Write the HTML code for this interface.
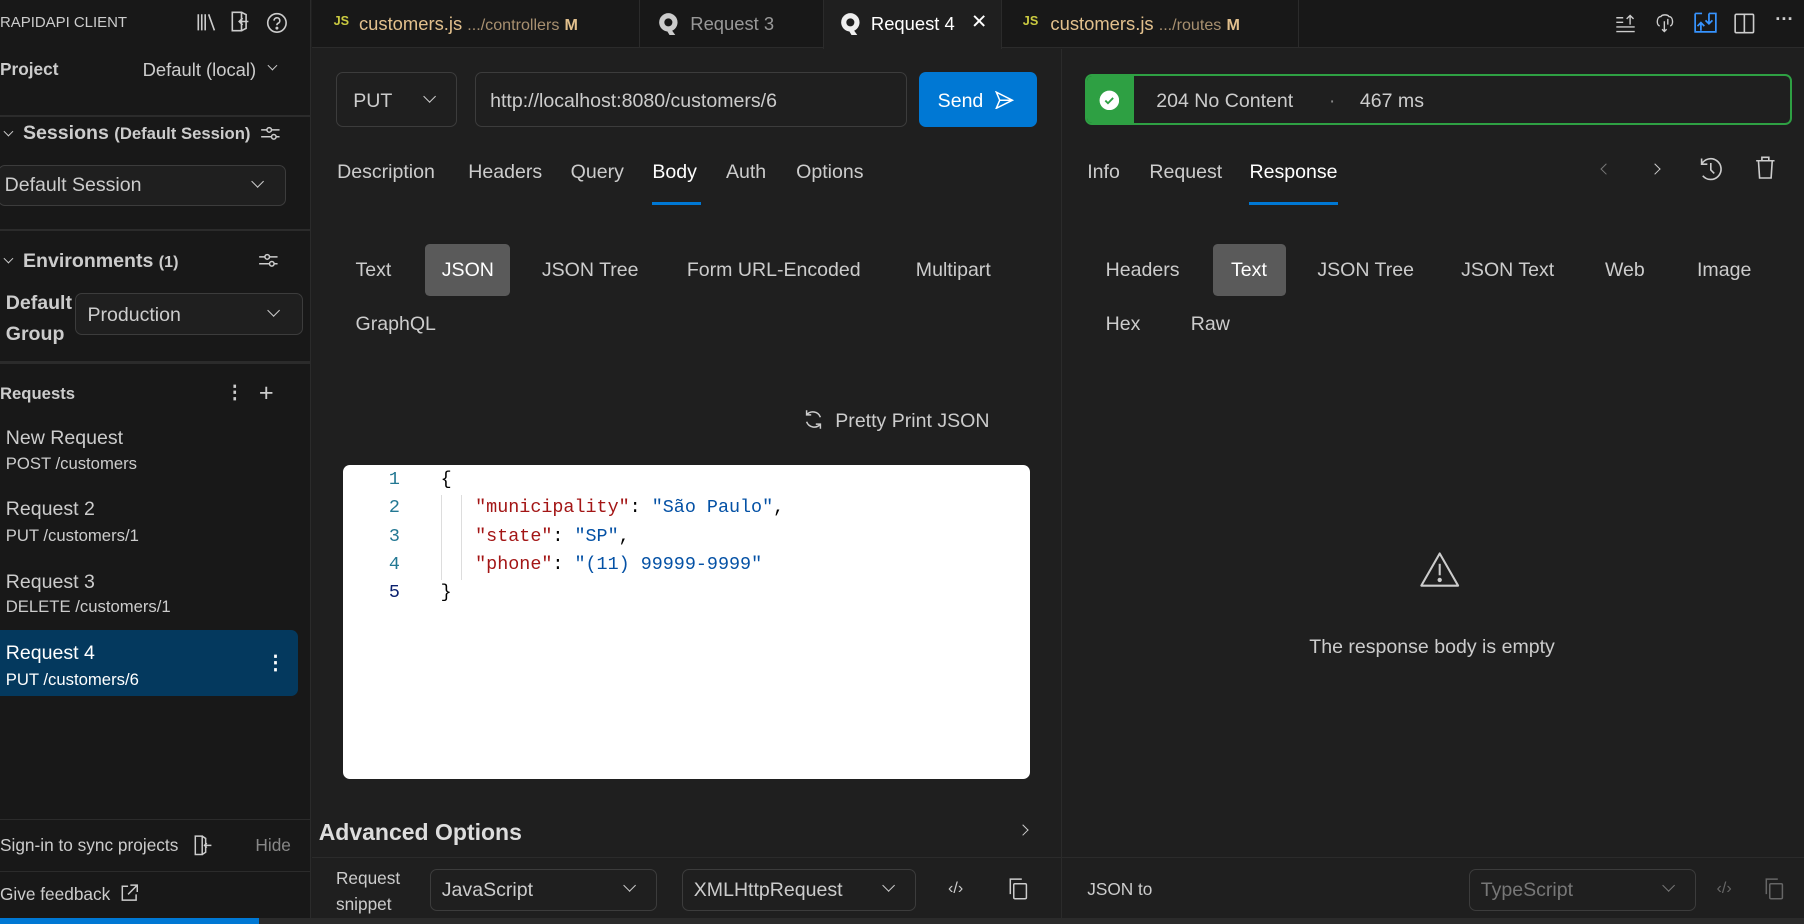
<!DOCTYPE html>
<html><head><meta charset="utf-8"><style>
*{box-sizing:border-box;margin:0;padding:0}
html,body{width:1804px;height:924px;overflow:hidden;background:#1f1f1f}
#w{zoom:1.15051;width:1568px;height:803px;position:relative;font-family:"Liberation Sans",sans-serif;color:#ccc;font-size:15px;background:#1f1f1f}
.a{position:absolute;white-space:nowrap}
.ln{position:absolute;background:#2b2b2b}
.dd{position:absolute;border:1px solid #3c3c3c;border-radius:6px;background:#1f1f1f}
.chev{position:absolute;width:8px;height:8px;border-right:1.5px solid #ccc;border-bottom:1.5px solid #ccc;transform:rotate(45deg)}
svg{position:absolute}
.mono{font-family:"Liberation Mono",monospace;font-size:16px}
</style></head><body><div id="w">
<!-- sidebar -->
<div class="a" style="left:0;top:0;width:270px;height:798px;background:#181818;border-right:1px solid #2b2b2b"></div>
<div class="a" style="left:0;top:12px;font-size:13px;color:#ccc">RAPIDAPI CLIENT</div>
<svg style="left:170px;top:10px" width="20" height="18" viewBox="0 0 20 18" fill="none" stroke="#ccc" stroke-width="1.4"><path d="M2 2v14M5 2v14M8 2v14M11 2l5 14"/></svg>
<svg style="left:200px;top:9px" width="18" height="20" viewBox="0 0 18 20" fill="none" stroke="#ccc" stroke-width="1.4"><path d="M2 2h8v16H2zM10 2l4 2v12l-4 2M16 10h-8M11 7l-3 3 3 3"/></svg>
<svg style="left:231px;top:10px" width="19" height="19" viewBox="0 0 19 19" fill="none" stroke="#ccc" stroke-width="1.4"><circle cx="9.5" cy="9.5" r="8"/><path d="M7 7.5a2.5 2.5 0 1 1 3.5 2.3c-.8.4-1 .9-1 1.7"/><circle cx="9.5" cy="14" r=".6" fill="#ccc"/></svg>
<div class="a" style="left:0;top:51px;font-weight:bold;font-size:15px;color:#ccc">Project</div>
<div class="a" style="left:124px;top:51px;font-size:16px">Default (local)</div>
<div class="chev" style="left:234px;top:54px;width:6px;height:6px;border-width:1px"></div>
<div class="ln" style="left:0;top:100px;width:270px;height:2px"></div>
<div class="chev" style="left:4px;top:111px;width:6px;height:6px;border-width:1px"></div>
<div class="a" style="left:20px;top:106px;font-weight:bold;font-size:17px">Sessions <span style="font-size:14.5px">(Default Session)</span></div>
<svg style="left:226px;top:107px" width="18" height="18" viewBox="0 0 18 18" fill="none" stroke="#ccc" stroke-width="1.3"><path d="M1 6h5M10 6h7M1 12h9M14 12h3"/><circle cx="8" cy="6" r="2"/><circle cx="12" cy="12" r="2"/></svg>
<div class="dd" style="left:-2px;top:143px;width:251px;height:36px"></div>
<div class="a" style="left:4px;top:151px;font-size:17px">Default Session</div>
<div class="chev" style="left:220px;top:154px"></div>
<div class="ln" style="left:0;top:199px;width:270px;height:2px"></div>
<div class="chev" style="left:4px;top:222px;width:6px;height:6px;border-width:1px"></div>
<div class="a" style="left:20px;top:217px;font-weight:bold;font-size:17px">Environments <span style="font-size:14px">(1)</span></div>
<svg style="left:224px;top:217px" width="18" height="18" viewBox="0 0 18 18" fill="none" stroke="#ccc" stroke-width="1.3"><path d="M1 6h5M10 6h7M1 12h9M14 12h3"/><circle cx="8" cy="6" r="2"/><circle cx="12" cy="12" r="2"/></svg>
<div class="a" style="left:5px;top:250px;font-weight:bold;font-size:17px;line-height:27px">Default<br>Group</div>
<div class="dd" style="left:65px;top:255px;width:198px;height:36px"></div>
<div class="a" style="left:76px;top:264px;font-size:17px">Production</div>
<div class="chev" style="left:234px;top:266px"></div>
<div class="ln" style="left:0;top:314px;width:270px;height:2px"></div>
<div class="a" style="left:0;top:334px;font-weight:bold;font-size:14.5px">Requests</div>
<div class="a" style="left:196px;top:331px;font-size:16px;font-weight:bold">⋮</div>
<div class="a" style="left:225px;top:329px;font-size:22px;font-weight:300">+</div>
<div class="a" style="left:5px;top:371px;font-size:17px">New Request</div>
<div class="a" style="left:5px;top:395px;font-size:14.5px">POST /customers</div>
<div class="a" style="left:5px;top:433px;font-size:17px">Request 2</div>
<div class="a" style="left:5px;top:457px;font-size:14.5px">PUT /customers/1</div>
<div class="a" style="left:5px;top:496px;font-size:17px">Request 3</div>
<div class="a" style="left:5px;top:519px;font-size:14.5px">DELETE /customers/1</div>
<div class="a" style="left:0;top:548px;width:259px;height:57px;background:#04395e;border-radius:0 6px 6px 0"></div>
<div class="a" style="left:5px;top:558px;font-size:17px;color:#fff">Request 4</div>
<div class="a" style="left:5px;top:582px;font-size:14.5px;color:#fff">PUT /customers/6</div>
<div class="a" style="left:231px;top:566px;font-size:17px;color:#fff;font-weight:bold">⋮</div>
<div class="ln" style="left:0;top:712px;width:270px;height:1px"></div>
<div class="a" style="left:0;top:726px;font-size:15px">Sign-in to sync projects</div>
<svg style="left:168px;top:726px" width="18" height="18" viewBox="0 0 18 18" fill="none" stroke="#ccc" stroke-width="1.3"><path d="M2 1h6v16H2zM8 1l3 2v12l-3 2M16 9h-6M12 7l-2 2 2 2"/></svg>
<div class="a" style="left:222px;top:726px;font-size:15px;color:#888">Hide</div>
<div class="ln" style="left:0;top:757px;width:270px;height:1px"></div>
<div class="a" style="left:0;top:768px;font-size:15px">Give feedback</div>
<svg style="left:104px;top:768px" width="16" height="16" viewBox="0 0 16 16" fill="none" stroke="#ccc" stroke-width="1.3"><path d="M7 2H2v12h12V9M9 1h6v6M15 1L7 9"/></svg>

<!-- tab bar -->
<div class="a" style="left:271px;top:0;width:1297px;height:42px;background:#181818;border-bottom:1px solid #2b2b2b"></div>
<div class="a" style="left:555px;top:0;width:1px;height:42px;background:#2b2b2b"></div>
<div class="a" style="left:715px;top:0;width:156px;height:43px;background:#1f1f1f;border-left:1px solid #2b2b2b;border-right:1px solid #2b2b2b"></div>
<div class="a" style="left:1128px;top:0;width:1px;height:42px;background:#2b2b2b"></div>
<div class="a" style="left:290px;top:12px;font-size:11px;font-weight:bold;color:#cbcb41">JS</div>
<div class="a" style="left:312px;top:11px;font-size:16px;color:#e2c08d">customers.js <span style="font-size:14px;color:#a89070">.../controllers</span> <b style="font-size:14px">M</b></div>
<svg style="left:572px;top:10px" width="18" height="20" viewBox="0 0 18 20"><circle cx="9" cy="9" r="8" fill="#ccc"/><circle cx="9" cy="9" r="3.5" fill="#181818"/><path d="M10 13l5 7h-5l-3-5z" fill="#ccc"/></svg>
<div class="a" style="left:600px;top:11px;font-size:16px;color:#999">Request 3</div>
<svg style="left:730px;top:10px" width="18" height="20" viewBox="0 0 18 20"><circle cx="9" cy="9" r="8" fill="#eee"/><circle cx="9" cy="9" r="3.5" fill="#1f1f1f"/><path d="M10 13l5 7h-5l-3-5z" fill="#eee"/></svg>
<div class="a" style="left:757px;top:11px;font-size:16px;color:#fff">Request 4</div>
<div class="a" style="left:844px;top:9px;font-size:17px;color:#fff">✕</div>
<div class="a" style="left:889px;top:12px;font-size:11px;font-weight:bold;color:#cbcb41">JS</div>
<div class="a" style="left:913px;top:11px;font-size:16px;color:#e2c08d">customers.js <span style="font-size:14px;color:#a89070">.../routes</span> <b style="font-size:14px">M</b></div>
<svg style="left:1403px;top:10px" width="20" height="20" viewBox="0 0 20 20" fill="none" stroke="#ccc" stroke-width="1.2"><path d="M2 5h6M2 9h6M2 13h16M2 17h16M14 11V3M11 6l3-3 3 3"/></svg>
<svg style="left:1438px;top:10px" width="20" height="20" viewBox="0 0 20 20" fill="none" stroke="#ccc" stroke-width="1.2"><path d="M5 12C2 12 2 4 6 4c1-2 6-2 7 0 4 0 4 8 1 8M9 8v9M7 15l2 2 2-2M12 6v5"/></svg>
<svg style="left:1472px;top:9px" width="20" height="22" viewBox="0 0 20 22" fill="none" stroke="#3794ff" stroke-width="1.5"><path d="M1 3h6M13 3h6v16H1V3M13 3v9M10 9l3 3 3-3M6 18v-7M3 14l3-3 3 3"/></svg>
<svg style="left:1507px;top:10px" width="18" height="20" viewBox="0 0 18 20" fill="none" stroke="#ccc" stroke-width="1.4"><rect x="1" y="2" width="16" height="16" rx="1"/><path d="M9 2v16"/></svg>
<div class="a" style="left:1543px;top:7px;font-size:16px;font-weight:bold">···</div>

<!-- main request panel -->
<div class="a" style="left:922px;top:43px;width:1px;height:755px;background:#2b2b2b"></div>
<div class="dd" style="left:292px;top:63px;width:105px;height:47px"></div>
<div class="a" style="left:307px;top:78px;font-size:17px">PUT</div>
<div class="chev" style="left:369px;top:80px"></div>
<div class="dd" style="left:413px;top:63px;width:375px;height:47px"></div>
<div class="a" style="left:426px;top:78px;font-size:17px">http://localhost:8080/customers/6</div>
<div class="a" style="left:799px;top:63px;width:102px;height:47px;background:#0078d4;border-radius:6px"></div>
<div class="a" style="left:815px;top:78px;font-size:17px;color:#fff">Send</div>
<svg style="left:864px;top:79px" width="18" height="16" viewBox="0 0 18 16" fill="none" stroke="#fff" stroke-width="1.3"><path d="M2 1l14 7-14 7 3-7zM5 8h11"/></svg>
<div class="a" style="left:293px;top:140px;font-size:17px">Description</div>
<div class="a" style="left:407px;top:140px;font-size:17px">Headers</div>
<div class="a" style="left:496px;top:140px;font-size:17px">Query</div>
<div class="a" style="left:567px;top:140px;font-size:17px;color:#fff">Body</div>
<div class="a" style="left:567px;top:176px;width:42px;height:2px;background:#0078d4"></div>
<div class="a" style="left:631px;top:140px;font-size:17px">Auth</div>
<div class="a" style="left:692px;top:140px;font-size:17px">Options</div>
<div class="a" style="left:309px;top:225px;font-size:17px">Text</div>
<div class="a" style="left:369px;top:212px;width:74px;height:45px;background:#5a5a5a;border-radius:4px"></div>
<div class="a" style="left:384px;top:225px;font-size:17px;color:#fff">JSON</div>
<div class="a" style="left:471px;top:225px;font-size:17px">JSON Tree</div>
<div class="a" style="left:597px;top:225px;font-size:17px">Form URL-Encoded</div>
<div class="a" style="left:796px;top:225px;font-size:17px">Multipart</div>
<div class="a" style="left:309px;top:272px;font-size:17px">GraphQL</div>
<svg style="left:697px;top:355px" width="20" height="20" viewBox="0 0 20 20" fill="none" stroke="#ccc" stroke-width="1.3"><path d="M16 8A7 7 0 0 0 4 6M4 2v4h4M4 12a7 7 0 0 0 12 2M16 18v-4h-4"/></svg>
<div class="a" style="left:726px;top:356px;font-size:17px">Pretty Print JSON</div>
<div class="a" style="left:298px;top:404px;width:597px;height:273px;background:#fff;border-radius:6px"></div>
<div class="a" style="left:383px;top:430px;width:1px;height:74px;background:#ddd"></div>
<div class="a" style="left:401px;top:430px;width:1px;height:74px;background:#ddd"></div>
<div class="a mono" style="left:338px;top:405px;line-height:24.6px;color:#237893">1<br>2<br>3<br>4<br><span style="color:#0b216f">5</span></div>
<div class="a mono" style="left:383px;top:405px;line-height:24.6px;color:#000">{<br><span style="margin-left:30px"></span><span style="color:#a31515">"municipality"</span>: <span style="color:#0451a5">"São Paulo"</span>,<br><span style="margin-left:30px"></span><span style="color:#a31515">"state"</span>: <span style="color:#0451a5">"SP"</span>,<br><span style="margin-left:30px"></span><span style="color:#a31515">"phone"</span>: <span style="color:#0451a5">"(11) 99999-9999"</span><br>}</div>
<div class="a" style="left:277px;top:712px;font-size:20px;font-weight:bold;color:#ddd">Advanced Options</div>
<div class="chev" style="left:886px;top:718px;transform:rotate(-45deg);width:7px;height:7px;border-width:1.2px"></div>
<div class="a" style="left:271px;top:745px;width:1297px;height:1px;background:#2b2b2b"></div>
<div class="a" style="left:292px;top:753px;font-size:15px;line-height:22px">Request<br>snippet</div>
<div class="dd" style="left:374px;top:755px;width:197px;height:37px"></div>
<div class="a" style="left:384px;top:764px;font-size:17px">JavaScript</div>
<div class="chev" style="left:543px;top:766px"></div>
<div class="dd" style="left:593px;top:755px;width:203px;height:37px"></div>
<div class="a" style="left:603px;top:764px;font-size:17px">XMLHttpRequest</div>
<div class="chev" style="left:768px;top:766px"></div>
<div class="a" style="left:824px;top:764px;font-size:14px">‹/›</div>
<svg style="left:876px;top:763px" width="18" height="19" viewBox="0 0 18 19" fill="none" stroke="#ccc" stroke-width="1.3"><rect x="5" y="5" width="11" height="13" rx="1"/><path d="M2 14V1h10"/></svg>

<!-- right panel -->
<div class="a" style="left:943px;top:64px;width:615px;height:45px;border:2px solid #2ea043;border-radius:6px;overflow:hidden"><div style="width:41px;height:45px;background:#2ea043"></div></div>
<svg style="left:955px;top:78px" width="18" height="18" viewBox="0 0 18 18"><circle cx="9" cy="9" r="8.5" fill="#fff"/><path d="M5.5 9.2l2.3 2.3 4.5-4.6" fill="none" stroke="#2ea043" stroke-width="1.6"/></svg>
<div class="a" style="left:1005px;top:78px;font-size:17px">204 No Content</div>
<div class="a" style="left:1155px;top:78px;font-size:17px;color:#888">·</div>
<div class="a" style="left:1182px;top:78px;font-size:17px">467 ms</div>
<div class="a" style="left:945px;top:140px;font-size:17px">Info</div>
<div class="a" style="left:999px;top:140px;font-size:17px">Request</div>
<div class="a" style="left:1086px;top:140px;font-size:17px;color:#fff">Response</div>
<div class="a" style="left:1086px;top:176px;width:77px;height:2px;background:#0078d4"></div>
<div class="chev" style="left:1392px;top:143px;transform:rotate(135deg);width:7px;height:7px;border-width:1.2px;border-color:#777"></div>
<div class="chev" style="left:1435px;top:143px;transform:rotate(-45deg);width:7px;height:7px;border-width:1.2px"></div>
<svg style="left:1475px;top:135px" width="24" height="24" viewBox="0 0 24 24" fill="none" stroke="#ccc" stroke-width="1.4"><path d="M5 18A9 9 0 1 0 4 8M4 3v5h5M12 7v6l3 3"/></svg>
<svg style="left:1525px;top:135px" width="18" height="22" viewBox="0 0 18 22" fill="none" stroke="#ccc" stroke-width="1.4"><path d="M1 5h16M6 5V2h6v3M3 5l1 15h10l1-15"/></svg>
<div class="a" style="left:961px;top:225px;font-size:17px">Headers</div>
<div class="a" style="left:1054px;top:212px;width:64px;height:45px;background:#5a5a5a;border-radius:4px"></div>
<div class="a" style="left:1070px;top:225px;font-size:17px;color:#fff">Text</div>
<div class="a" style="left:1145px;top:225px;font-size:17px">JSON Tree</div>
<div class="a" style="left:1270px;top:225px;font-size:17px">JSON Text</div>
<div class="a" style="left:1395px;top:225px;font-size:17px">Web</div>
<div class="a" style="left:1475px;top:225px;font-size:17px">Image</div>
<div class="a" style="left:961px;top:272px;font-size:17px">Hex</div>
<div class="a" style="left:1035px;top:272px;font-size:17px">Raw</div>
<svg style="left:1233px;top:478px" width="36" height="34" viewBox="0 0 36 34" fill="none" stroke="#ccc" stroke-width="1.8"><path d="M18 3L2 31h32z" stroke-linejoin="round"/><path d="M18 12v10"/><circle cx="18" cy="26" r="1" fill="#ccc"/></svg>
<div class="a" style="left:1138px;top:553px;font-size:17px">The response body is empty</div>
<div class="a" style="left:945px;top:764px;font-size:15px">JSON to</div>
<div class="dd" style="left:1277px;top:755px;width:197px;height:37px"></div>
<div class="a" style="left:1287px;top:764px;font-size:17px;color:#777">TypeScript</div>
<div class="chev" style="left:1446px;top:766px;border-color:#777"></div>
<div class="a" style="left:1492px;top:764px;font-size:14px;color:#666">‹/›</div>
<svg style="left:1533px;top:763px" width="18" height="19" viewBox="0 0 18 19" fill="none" stroke="#666" stroke-width="1.3"><rect x="5" y="5" width="11" height="13" rx="1"/><path d="M2 14V1h10"/></svg>

<!-- bottom strip -->
<div class="a" style="left:0;top:798px;width:1568px;height:5px;background:#2b2b2b"></div>
<div class="a" style="left:0;top:798px;width:225px;height:5px;background:#0078d4"></div>
</div></body></html>
